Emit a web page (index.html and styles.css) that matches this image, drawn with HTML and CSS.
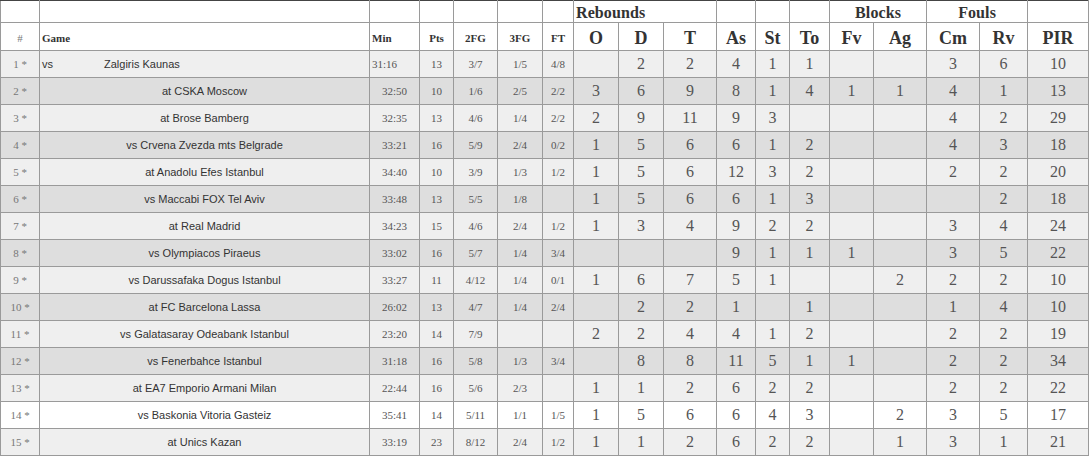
FILE: index.html
```html
<!DOCTYPE html>
<html>
<head>
<meta charset="utf-8">
<link rel="stylesheet" href="styles.css">
</head>
<body>
<table class="stats">
<colgroup>
<col style="width:39px"><col style="width:330px"><col style="width:50px"><col style="width:34px"><col style="width:44px"><col style="width:45px"><col style="width:31px"><col style="width:45px"><col style="width:45px"><col style="width:53px"><col style="width:39px"><col style="width:34px"><col style="width:40px"><col style="width:44px"><col style="width:53px"><col style="width:53px"><col style="width:48px"><col style="width:61px">
</colgroup>
<thead>
<tr class="h1">
<th></th><th></th><th></th><th></th><th></th><th></th><th></th>
<th colspan="3" class="group left">Rebounds</th>
<th></th><th></th><th></th>
<th colspan="2" class="group">Blocks</th>
<th colspan="2" class="group">Fouls</th>
<th></th>
</tr>
<tr class="h2">
<th class="hash">#</th><th class="sm left">Game</th><th class="sm left">Min</th><th class="sm">Pts</th><th class="sm">2FG</th><th class="sm">3FG</th><th class="sm">FT</th>
<th>O</th><th>D</th><th>T</th><th>As</th><th>St</th><th>To</th><th>Fv</th><th>Ag</th><th>Cm</th><th>Rv</th><th>PIR</th>
</tr>
</thead>
<tbody>
<tr class="odd"><td class="num">1 *</td><td class="game left"><span class="vs">vs</span>Zalgiris Kaunas</td><td class="s left">31:16</td><td class="s">13</td><td class="s">3/7</td><td class="s">1/5</td><td class="s">4/8</td><td></td><td>2</td><td>2</td><td>4</td><td>1</td><td>1</td><td></td><td></td><td>3</td><td>6</td><td>10</td></tr>
<tr class="even"><td class="num">2 *</td><td class="game">at CSKA Moscow</td><td class="s">32:50</td><td class="s">10</td><td class="s">1/6</td><td class="s">2/5</td><td class="s">2/2</td><td>3</td><td>6</td><td>9</td><td>8</td><td>1</td><td>4</td><td>1</td><td>1</td><td>4</td><td>1</td><td>13</td></tr>
<tr class="odd"><td class="num">3 *</td><td class="game">at Brose Bamberg</td><td class="s">32:35</td><td class="s">13</td><td class="s">4/6</td><td class="s">1/4</td><td class="s">2/2</td><td>2</td><td>9</td><td>11</td><td>9</td><td>3</td><td></td><td></td><td></td><td>4</td><td>2</td><td>29</td></tr>
<tr class="even"><td class="num">4 *</td><td class="game">vs Crvena Zvezda mts Belgrade</td><td class="s">33:21</td><td class="s">16</td><td class="s">5/9</td><td class="s">2/4</td><td class="s">0/2</td><td>1</td><td>5</td><td>6</td><td>6</td><td>1</td><td>2</td><td></td><td></td><td>4</td><td>3</td><td>18</td></tr>
<tr class="odd"><td class="num">5 *</td><td class="game">at Anadolu Efes Istanbul</td><td class="s">34:40</td><td class="s">10</td><td class="s">3/9</td><td class="s">1/3</td><td class="s">1/2</td><td>1</td><td>5</td><td>6</td><td>12</td><td>3</td><td>2</td><td></td><td></td><td>2</td><td>2</td><td>20</td></tr>
<tr class="even"><td class="num">6 *</td><td class="game">vs Maccabi FOX Tel Aviv</td><td class="s">33:48</td><td class="s">13</td><td class="s">5/5</td><td class="s">1/8</td><td class="s"></td><td>1</td><td>5</td><td>6</td><td>6</td><td>1</td><td>3</td><td></td><td></td><td></td><td>2</td><td>18</td></tr>
<tr class="odd"><td class="num">7 *</td><td class="game">at Real Madrid</td><td class="s">34:23</td><td class="s">15</td><td class="s">4/6</td><td class="s">2/4</td><td class="s">1/2</td><td>1</td><td>3</td><td>4</td><td>9</td><td>2</td><td>2</td><td></td><td></td><td>3</td><td>4</td><td>24</td></tr>
<tr class="even"><td class="num">8 *</td><td class="game">vs Olympiacos Piraeus</td><td class="s">33:02</td><td class="s">16</td><td class="s">5/7</td><td class="s">1/4</td><td class="s">3/4</td><td></td><td></td><td></td><td>9</td><td>1</td><td>1</td><td>1</td><td></td><td>3</td><td>5</td><td>22</td></tr>
<tr class="odd"><td class="num">9 *</td><td class="game">vs Darussafaka Dogus Istanbul</td><td class="s">33:27</td><td class="s">11</td><td class="s">4/12</td><td class="s">1/4</td><td class="s">0/1</td><td>1</td><td>6</td><td>7</td><td>5</td><td>1</td><td></td><td></td><td>2</td><td>2</td><td>2</td><td>10</td></tr>
<tr class="even"><td class="num">10 *</td><td class="game">at FC Barcelona Lassa</td><td class="s">26:02</td><td class="s">13</td><td class="s">4/7</td><td class="s">1/4</td><td class="s">2/4</td><td></td><td>2</td><td>2</td><td>1</td><td></td><td>1</td><td></td><td></td><td>1</td><td>4</td><td>10</td></tr>
<tr class="odd"><td class="num">11 *</td><td class="game">vs Galatasaray Odeabank Istanbul</td><td class="s">23:20</td><td class="s">14</td><td class="s">7/9</td><td class="s"></td><td class="s"></td><td>2</td><td>2</td><td>4</td><td>4</td><td>1</td><td>2</td><td></td><td></td><td>2</td><td>2</td><td>19</td></tr>
<tr class="even"><td class="num">12 *</td><td class="game">vs Fenerbahce Istanbul</td><td class="s">31:18</td><td class="s">16</td><td class="s">5/8</td><td class="s">1/3</td><td class="s">3/4</td><td></td><td>8</td><td>8</td><td>11</td><td>5</td><td>1</td><td>1</td><td></td><td>2</td><td>2</td><td>34</td></tr>
<tr class="odd"><td class="num">13 *</td><td class="game">at EA7 Emporio Armani Milan</td><td class="s">22:44</td><td class="s">16</td><td class="s">5/6</td><td class="s">2/3</td><td class="s"></td><td>1</td><td>1</td><td>2</td><td>6</td><td>2</td><td>2</td><td></td><td></td><td>2</td><td>2</td><td>22</td></tr>
<tr class="white"><td class="num">14 *</td><td class="game">vs Baskonia Vitoria Gasteiz</td><td class="s">35:41</td><td class="s">14</td><td class="s">5/11</td><td class="s">1/1</td><td class="s">1/5</td><td>1</td><td>5</td><td>6</td><td>6</td><td>4</td><td>3</td><td></td><td>2</td><td>3</td><td>5</td><td>17</td></tr>
<tr class="odd"><td class="num">15 *</td><td class="game">at Unics Kazan</td><td class="s">33:19</td><td class="s">23</td><td class="s">8/12</td><td class="s">2/4</td><td class="s">1/2</td><td>1</td><td>1</td><td>2</td><td>6</td><td>2</td><td>2</td><td></td><td>1</td><td>3</td><td>1</td><td>21</td></tr>
</tbody>
</table>
</body>
</html>
```
FILE: styles.css
```css
html, body {
  margin: 0;
  padding: 0;
  background: #ffffff;
}
.stats {
  border-collapse: collapse;
  table-layout: fixed;
  width: 1088px;
  font-family: "Liberation Serif", "Times New Roman", serif;
  color: #555555;
  border: 1px solid #444444;
}
.stats th, .stats td {
  border: 1px solid #9a9a9a;
  padding: 0 2px;
  text-align: center;
  vertical-align: middle;
  overflow: hidden;
  white-space: nowrap;
}
.stats thead th {
  background: #ffffff;
  color: #333333;
  font-weight: bold;
  font-size: 18px;
  line-height: 18px;
}
.stats tr.h1 th {
  height: 21px;
  border-top: 1px solid #444444;
  vertical-align: bottom;
}
.stats tr.h2 th {
  height: 24px;
  padding-top: 3px;
}
.stats th.group {
  font-size: 16px;
  letter-spacing: 0.1px;
  padding-bottom: 0;
}
.stats th.sm {
  font-size: 11px;
}
.stats th.hash {
  font-size: 11px;
  font-weight: normal;
  color: #777777;
}
.stats .left {
  text-align: left;
}
.stats tbody td {
  height: 26px;
  font-size: 16px;
  color: #555555;
}
.stats tbody td.s {
  font-size: 11px;
}
.stats tbody td.num {
  font-size: 11px;
  color: #777777;
}
.stats tbody td.game {
  font-family: "Liberation Sans", Arial, sans-serif;
  font-size: 11px;
  color: #333333;
}
.stats .vs {
  display: inline-block;
  width: 62px;
}
.stats tr.odd td {
  background: #efefef;
}
.stats tr.even td {
  background: #dedede;
}
.stats tr.white td {
  background: #ffffff;
}
```
